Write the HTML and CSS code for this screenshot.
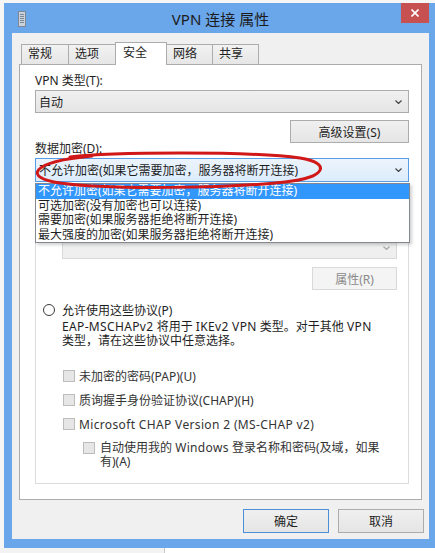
FILE: index.html
```html
<!DOCTYPE html>
<html lang="zh-CN">
<head>
    <meta charset="UTF-8">
    <title>VPN 连接 属性</title>
    <link rel="stylesheet" href="styles.css">
</head>
<body>
    <div class="screen">
        <div class="window">
            <div class="titlebar">
                <svg class="app-icon" width="8" height="16" viewBox="0 0 8 16">
                    <rect x="0.5" y="0.5" width="7" height="15" fill="#c9d3dd" stroke="#7d8894"/>
                    <line x1="2" y1="3.5" x2="6" y2="3.5" stroke="#7d8894"/>
                    <line x1="2" y1="5.5" x2="6" y2="5.5" stroke="#7d8894"/>
                    <line x1="2" y1="7.5" x2="6" y2="7.5" stroke="#7d8894"/>
                    <line x1="2" y1="9.5" x2="6" y2="9.5" stroke="#7d8894"/>
                    <line x1="2" y1="11.5" x2="6" y2="11.5" stroke="#7d8894"/>
                </svg>
                <div class="title">VPN 连接 属性</div>
                <div class="close">
                    <svg width="8" height="8" viewBox="0 0 8 8">
                        <path d="M0.5 0.5 L7.5 7.5 M7.5 0.5 L0.5 7.5" stroke="#fff" stroke-width="1.6"/>
                    </svg>
                </div>
            </div>

            <div class="client">
                <div class="tabs">
                    <div class="tab w48">常规</div>
                    <div class="tab w48">选项</div>
                    <div class="tab tab-active">安全</div>
                    <div class="tab w47">网络</div>
                    <div class="tab w47">共享</div>
                </div>

                <div class="panel">
                    <div class="label">VPN 类型(T):</div>
                    <div class="combo">
                        <span>自动</span>
                        <svg class="chevron" width="7" height="4" viewBox="0 0 7 4"><polyline points="0.5,0.5 3.5,3.5 6.5,0.5" fill="none" stroke="#444" stroke-width="1.2"/></svg>
                    </div>
                    <div class="actions">
                        <button class="btn btn-adv">高级设置(S)</button>
                    </div>

                    <div class="label label-tight">数据加密(D):</div>
                    <div class="combo-wrap">
                        <div class="combo combo-hot">
                            <span>不允许加密(如果它需要加密，服务器将断开连接)</span>
                            <svg class="chevron" width="7" height="4" viewBox="0 0 7 4"><polyline points="0.5,0.5 3.5,3.5 6.5,0.5" fill="none" stroke="#444" stroke-width="1.2"/></svg>
                        </div>
                        <ul class="dropdown">
                            <li class="selected">不允许加密(如果它需要加密，服务器将断开连接)</li>
                            <li>可选加密(没有加密也可以连接)</li>
                            <li>需要加密(如果服务器拒绝将断开连接)</li>
                            <li>最大强度的加密(如果服务器拒绝将断开连接)</li>
                        </ul>
                    </div>

                    <div class="group">
                        <div class="radio-row">
                            <span class="radio"></span>
                            <span>使用可扩展的身份验证协议(EAP)(E)</span>
                        </div>
                        <div class="combo combo-disabled">
                            <span></span>
                            <svg class="chevron" width="7" height="4" viewBox="0 0 7 4"><polyline points="0.5,0.5 3.5,3.5 6.5,0.5" fill="none" stroke="#a8a8a8" stroke-width="1.2"/></svg>
                        </div>
                        <div class="actions actions-group">
                            <button class="btn btn-disabled">属性(R)</button>
                        </div>

                        <div class="radio-row radio-allow">
                            <span class="radio"></span>
                            <span>允许使用这些协议(P)</span>
                        </div>
                        <div class="desc"><span class="en">EAP-MSCHAPv2</span> 将用于 <span class="en">IKEv2 VPN</span> 类型。对于其他 <span class="en">VPN</span><br>类型，请在这些协议中任意选择。</div>

                        <div class="check-row first">
                            <span class="checkbox"></span>
                            <span>未加密的密码(PAP)(U)</span>
                        </div>
                        <div class="check-row">
                            <span class="checkbox"></span>
                            <span>质询握手身份验证协议(CHAP)(H)</span>
                        </div>
                        <div class="check-row">
                            <span class="checkbox"></span>
                            <span class="en">Microsoft CHAP Version 2 (MS-CHAP v2)</span>
                        </div>
                        <div class="check-row sub">
                            <span class="checkbox"></span>
                            <span>自动使用我的 <span class="en">Windows</span> 登录名称和密码(及域，如果<br>有)(A)</span>
                        </div>
                    </div>
                </div>

                <div class="footer">
                    <button class="btn btn-default">确定</button>
                    <button class="btn">取消</button>
                </div>
            </div>
        </div>
        <div class="below"><div class="below-left"></div></div>

        <!-- red hand-drawn mark over the encryption combo -->
        <svg class="annotation" width="435" height="553" viewBox="0 0 435 553">
            <path d="M70 157 C110 152, 250 151, 300 158 C332 163, 326 178, 285 182 C230 188, 110 190, 60 183 C24 178, 28 162, 92 156"
                  fill="none" stroke="#d01818" stroke-width="3" stroke-linecap="round"/>
        </svg>
    </div>
</body>
</html>
```

FILE: styles.css
```css
* {
    box-sizing: border-box;
}

body {
    margin: 0;
    background-color: #fff;
    font-family: "Noto Sans", "Noto Sans CJK SC", sans-serif;
    font-size: 12px;
    color: #1e1e1e;
}

.screen {
    position: relative;
    width: 435px;
    height: 553px;
    overflow: hidden;
    background-color: #f6f6f6;
}

.window {
    width: 433px;
    height: 545px;
    margin: 3px 0 0 4px;
    padding: 0 8px 9px;
    background-color: #6aa6ea;
    display: flex;
    flex-direction: column;
}

.titlebar {
    height: 30px;
    margin: 0 -8px;
    display: grid;
    grid-template-columns: 1fr auto 1fr;
    align-items: start;
}

.app-icon {
    margin: 8px 0 0 14px;
}

.title {
    font-size: 15px;
    line-height: 32px;
    color: #1b1b1b;
}

.close {
    justify-self: end;
    width: 28px;
    height: 20px;
    margin-right: 8px;
    background-color: #c75050;
    display: flex;
    align-items: center;
    justify-content: center;
}

.client {
    flex: 1;
    background-color: #f0f0f0;
    padding: 9px 7px 0 7px;
}

.tabs {
    position: relative;
    z-index: 1;
    display: flex;
    align-items: flex-end;
    height: 22px;
    padding-left: 2px;
}

.tab {
    height: 20px;
    margin-left: -1px;
    padding-left: 6px;
    line-height: 18px;
    border: 1px solid #acacac;
    border-bottom: none;
    background: linear-gradient(#f2f2f2, #e6e6e6);
}

.tab:first-child {
    margin-left: 0;
}

.w48 {
    width: 48px;
}

.w47 {
    width: 47px;
}

.tab-active {
    width: 52px;
    height: 23px;
    margin-bottom: -1px;
    padding-left: 7px;
    line-height: 20px;
    background: #fff;
}

.panel {
    height: 436px;
    padding: 8px 12px 0 15px;
    background-color: #fff;
    border: 1px solid #acacac;
}

.label {
    height: 15px;
    line-height: 15px;
}

.label-tight {
    height: 12px;
    line-height: 12px;
}

.combo {
    display: flex;
    align-items: center;
    justify-content: space-between;
    height: 23px;
    margin-top: 2px;
    padding: 0 6px 0 3px;
    border: 1px solid #acacac;
    background: linear-gradient(#f0f0f0, #e5e5e5);
    white-space: nowrap;
}

.combo-wrap {
    position: relative;
    margin-top: 3px;
}

.combo-hot {
    height: 24px;
    margin-top: 0;
    border-color: #569de5;
    background: linear-gradient(#ecf4fc, #dcecfc);
}

.dropdown {
    position: absolute;
    top: calc(100% + 1px);
    left: 0;
    right: -1px;
    z-index: 2;
    height: 60px;
    margin: 0;
    padding: 0;
    list-style: none;
    background-color: #fff;
    border: 1px solid #828790;
    box-shadow: 2px 2px 3px rgba(0, 0, 0, 0.18);
}

.dropdown li {
    height: 14.5px;
    line-height: 14.5px;
    padding-left: 2px;
    white-space: nowrap;
}

.dropdown .selected {
    background-color: #3297fd;
    color: #fff;
}

.actions {
    display: flex;
    justify-content: flex-end;
    margin-top: 7px;
}

.btn {
    height: 23px;
    padding: 0;
    font: inherit;
    color: inherit;
    border: 1px solid #acacac;
    background: linear-gradient(#f0f0f0, #e5e5e5);
}

.btn-adv {
    width: 119px;
}

.group {
    height: 288px;
    margin-top: 14px;
    padding: 10px 11px 0 7px;
    border: 1px solid #dcdcdc;
}

.radio-row {
    display: flex;
    align-items: center;
    gap: 7px;
    height: 15px;
    white-space: nowrap;
}

.radio {
    width: 12px;
    height: 12px;
    border: 1px solid #3c3c3c;
    border-radius: 50%;
    background-color: #fff;
}

.combo-disabled {
    margin: 14px 0 0 19px;
    border-color: #d9d9d9;
    background: #efefef;
}

.actions-group {
    margin-top: 8px;
}

.btn-disabled {
    width: 85px;
    color: #8a8a8a;
    border-color: #d9d9d9;
    background: #f4f4f4;
}

.radio-allow {
    height: 16px;
    margin-top: 12px;
}

.desc {
    margin: 2px 0 0 19px;
    line-height: 14px;
    white-space: nowrap;
}

/* latin runs render a touch wider in the original UI font */
.en {
    letter-spacing: 0.35px;
}

.check-row {
    display: flex;
    align-items: center;
    gap: 4px;
    height: 16px;
    margin: 8px 0 0 20px;
    color: #333;
    white-space: nowrap;
}

.check-row.first {
    margin-top: 20px;
}

.checkbox {
    width: 12px;
    height: 12px;
    border: 1px solid #bcbcbc;
    background-color: #e6e6e6;
}

.check-row.sub {
    align-items: flex-start;
    gap: 5px;
    height: 28px;
    margin: 9px 0 0 40px;
    line-height: 14px;
}

.check-row.sub .checkbox {
    margin-top: 1px;
}

.footer {
    display: flex;
    justify-content: flex-end;
    gap: 9px;
    margin: 9px -2px 0 0;
}

.footer .btn {
    width: 86px;
    height: 24px;
}

.btn-default {
    border-color: #4a8fd8;
}

.below {
    display: flex;
    height: 5px;
    background-color: #fff;
}

.below-left {
    width: 165px;
    border-right: 1px solid #c9c9c9;
    background-color: #f3f3f3;
}

.annotation {
    position: absolute;
    top: 0;
    left: 0;
    z-index: 5;
    pointer-events: none;
}
```
